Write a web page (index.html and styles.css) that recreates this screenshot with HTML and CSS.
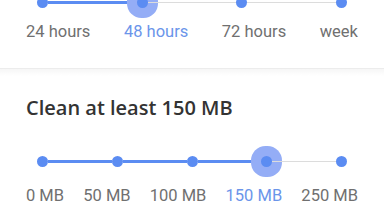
FILE: index.html
```html
<!DOCTYPE html>
<html lang="en">
<head>
    <meta charset="UTF-8">
    <meta name="viewport" content="width=device-width, initial-scale=1.0">
    <title>Clean settings</title>
    <link rel="stylesheet" href="styles.css">
</head>
<body>

    <!-- Age slider (scrolled, only the bottom is visible) -->
    <div class="section section-age">
        <div class="slider">
            <span class="dot"></span>
            <span class="seg active"></span>
            <span class="dot current"></span>
            <span class="seg"></span>
            <span class="dot"></span>
            <span class="seg"></span>
            <span class="dot"></span>
        </div>
        <div class="labels">
            <span class="label">24 hours</span>
            <span class="label selected">48 hours</span>
            <span class="label">72 hours</span>
            <span class="label">week</span>
        </div>
    </div>

    <div class="divider"></div>

    <!-- Size slider -->
    <div class="section section-size">
        <h2 class="title">Clean at least 150 MB</h2>
        <div class="slider">
            <span class="dot"></span>
            <span class="seg active"></span>
            <span class="dot"></span>
            <span class="seg active"></span>
            <span class="dot"></span>
            <span class="seg active"></span>
            <span class="dot current"></span>
            <span class="seg"></span>
            <span class="dot"></span>
        </div>
        <div class="labels">
            <span class="label">0 MB</span>
            <span class="label">50 MB</span>
            <span class="label">100 MB</span>
            <span class="label selected">150 MB</span>
            <span class="label">250 MB</span>
        </div>
    </div>

</body>
</html>
```

FILE: styles.css
```css
body, html {
    margin: 0;
    padding: 0;
    background: #fff;
    font-family: Roboto, "Liberation Sans", sans-serif;
    overflow: hidden;
}

.section {
    display: flow-root; /* keep child margins inside */
    padding: 0 26px;
}

.section-age {
    height: 68px;
}

/* Slider track with dots */
.slider {
    display: flex;
    align-items: center;
    height: 12px;
    margin: 0 11px;
}

.section-age .slider {
    margin-top: -4px;
}

.dot {
    flex: 0 0 11px;
    height: 11px;
    border-radius: 50%;
    background-color: #5b8cf2;
}

.dot.current {
    box-shadow: 0 0 0 10px #94adf6;
}

.seg {
    flex: 1;
    height: 1px;
    background-color: #dcdcdc;
}

.seg.active {
    height: 3px;
    background-color: #5b8cf2;
}

/* Labels centered under dots, the outer ones kept inside the padding */
.labels {
    display: flex;
    justify-content: space-between;
    margin-top: 14px;
    line-height: 20px;
}

.label {
    flex: 0 0 32px;
    display: flex;
    justify-content: center;
    white-space: nowrap;
    font-size: 16.5px;
    color: #707070;
}

.label:first-child { justify-content: flex-start; }
.label:last-child { justify-content: flex-end; }

.label.selected {
    color: #6b95ea;
}

.divider {
    height: 7px;
    border-top: 1px solid #ececec;
    background: linear-gradient(#f6f6f6, #fff);
}

.title {
    margin: 20px 0 0;
    font-family: "Open Sans", sans-serif;
    font-weight: 600;
    font-size: 20px;
    line-height: 24px;
    color: #333;
}

.section-size .slider {
    margin-top: 35px;
}

.section-size .labels {
    margin-top: 19px;
}
```
